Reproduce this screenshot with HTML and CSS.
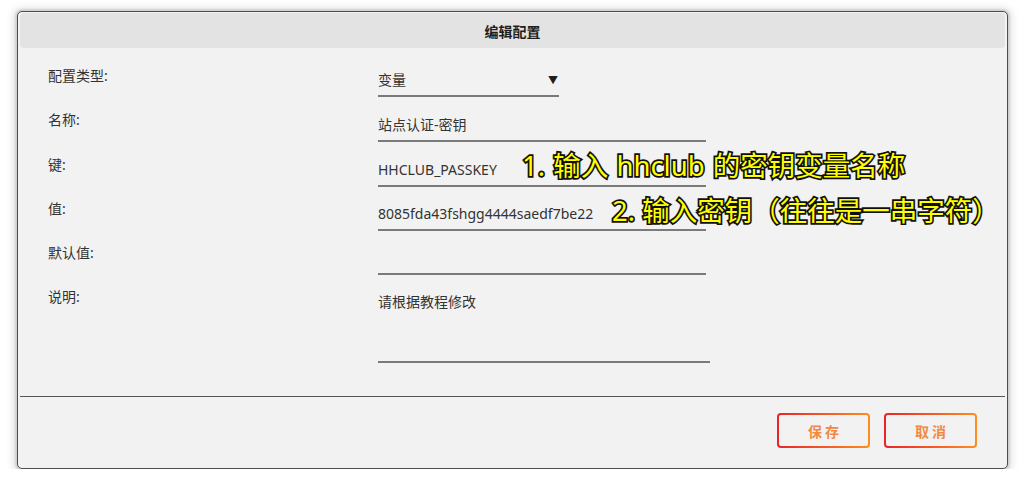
FILE: index.html
```html
<!DOCTYPE html>
<html lang="zh-CN">
<head>
<meta charset="utf-8">
<title>编辑配置</title>
<link rel="stylesheet" href="styles.css">
</head>
<body>
<div class="page">
  <div class="window">
    <div class="header">编辑配置</div>
    <div class="form">
      <div class="row">
        <div class="label">配置类型:</div>
        <div class="field select"><span>变量</span><span class="arrow">▼</span></div>
      </div>
      <div class="row">
        <div class="label">名称:</div>
        <div class="field">站点认证-密钥</div>
      </div>
      <div class="row">
        <div class="label">键:</div>
        <div class="field">HHCLUB_PASSKEY</div>
      </div>
      <div class="row">
        <div class="label">值:</div>
        <div class="field">8085fda43fshgg4444saedf7be22</div>
      </div>
      <div class="row">
        <div class="label">默认值:</div>
        <div class="field"></div>
      </div>
      <div class="row">
        <div class="label">说明:</div>
        <div class="field area">请根据教程修改</div>
      </div>
    </div>
    <div class="footer">
      <button class="btn">保存</button>
      <button class="btn">取消</button>
    </div>
    <div class="note note1">1. 输入 hhclub 的密钥变量名称</div>
    <div class="note note2">2. 输入密钥（往往是一串字符）</div>
  </div>
</div>
</body>
</html>
```
FILE: styles.css
```css
html, body {
  margin: 0;
  padding: 0;
  background: #ffffff;
}
body {
  font-family: "Noto Sans", "Noto Sans CJK SC", sans-serif;
  color: #333333;
}
.page {
  padding: 11px 16px 0 17px;
}
.window {
  position: relative;
  box-sizing: border-box;
  height: 458px;
  border: 1px solid #4e4e4e;
  border-radius: 5px;
  background: #f2f2f2;
  box-shadow: 0 0 2px 2px rgba(0, 0, 0, 0.12), 0 1px 7px 5px rgba(0, 0, 0, 0.09);
  padding: 1px 2px 0 2px;
  display: flex;
  flex-direction: column;
}
.header {
  height: 35px;
  background: #e3e3e3;
  border-radius: 4px;
  display: flex;
  align-items: center;
  justify-content: center;
  font-size: 14px;
  font-weight: 700;
  color: #1e1e1e;
}
.form {
  flex: 1;
  padding: 18px 0 0 28px;
}
.row {
  display: grid;
  grid-template-columns: 330px auto;
  margin-bottom: 12.3px;
}
.label {
  font-size: 14px;
  line-height: 20px;
  color: #333;
}
.field {
  box-sizing: border-box;
  width: 328px;
  height: 32px;
  padding-top: 5px;
  font-size: 14px;
  line-height: 20px;
  color: #333;
  border-bottom: 2px solid #7a7a7a;
}
.select {
  width: 181px;
  height: 31px;
  margin-bottom: 1px;
  padding-top: 4px;
  display: flex;
  justify-content: space-between;
  padding-right: 1px;
}
.arrow {
  font-size: 10px;
  color: #1e1e1e;
}
.area {
  width: 332px;
  height: 76px;
}
.footer {
  height: 72px;
  box-sizing: border-box;
  border-top: 1px solid #555555;
  padding: 16px 28px 0 0;
  display: flex;
  justify-content: flex-end;
  align-items: flex-start;
  gap: 14px;
}
.btn {
  width: 93px;
  height: 35px;
  border: 2px solid transparent;
  border-radius: 4px;
  background:
    linear-gradient(#f2f2f2, #f2f2f2) padding-box,
    linear-gradient(90deg, #e8232c, #ff8d1e) border-box;
  color: #f2893e;
  font-family: "Noto Sans CJK SC", sans-serif;
  font-size: 14px;
  font-weight: 700;
  letter-spacing: 3px;
  text-indent: 3px;
  padding: 0;
}
.note {
  position: absolute;
  white-space: nowrap;
  font-family: "Noto Sans", "Noto Sans CJK SC", sans-serif;
  font-size: 27.5px;
  font-weight: 400;
  line-height: 1;
  color: #ffff00;
  -webkit-text-stroke: 3.4px #111;
  paint-order: stroke fill;
  text-shadow: 0 0 2px rgba(0, 0, 0, 0.45);
}
.note1 {
  left: 504px;
  top: 140px;
  word-spacing: 1px;
}
.note2 {
  left: 594px;
  top: 185px;
}
```
